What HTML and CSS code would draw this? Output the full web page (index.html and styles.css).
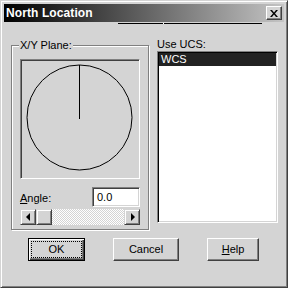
FILE: index.html
```html
<!DOCTYPE html>
<html>
<head>
<meta charset="utf-8">
<link rel="stylesheet" href="styles.css">
</head>
<body>
<div class="window">
  <div class="titlebar">
    <span class="title">North Location</span>
    <div class="close"><svg width="8" height="7" viewBox="0 0 8 7"><path d="M0 0h2l2 2.5L6 0h2L5 3.5 8 7H6L4 4.5 2 7H0l3-3.5z" fill="#000"/></svg></div>
  </div>
  <div class="artifact"><span class="dot"></span></div>
  <div class="main">
    <div class="group">
      <span class="legend">X/Y Plane:</span>
      <div class="compass">
        <svg width="116" height="116" viewBox="0 0 116 116">
          <circle cx="57.5" cy="56.5" r="52.5" fill="none" stroke="#000" stroke-width="1"/>
          <line x1="57.5" y1="4" x2="57.5" y2="58" stroke="#000" stroke-width="1"/>
        </svg>
      </div>
      <div class="angle-row">
        <span class="angle-label"><u>A</u>ngle:</span>
        <div class="input">0.0</div>
      </div>
      <div class="scrollbar">
        <div class="sb-btn"><span class="tri-left"></span></div>
        <div class="sb-thumb"></div>
        <div class="sb-track"></div>
        <div class="sb-btn"><span class="tri-right"></span></div>
      </div>
    </div>
    <div class="ucs">
      <div class="ucs-label">Use UCS:</div>
      <div class="list">
        <div class="item selected">WCS</div>
      </div>
    </div>
  </div>
  <div class="buttons">
    <div class="btn default"><div class="focus">OK</div></div>
    <div class="btn cancel">Cancel</div>
    <div class="btn help"><u>H</u>elp</div>
  </div>
</div>
</body>
</html>
```

FILE: styles.css
```css
* { box-sizing: border-box; }
html, body { margin: 0; padding: 0; }
body {
  width: 288px;
  height: 288px;
  overflow: hidden;
  background: #d4d4d4;
  font-family: "Liberation Sans", Arial, sans-serif;
  font-size: 11px;
  color: #000;
}
.window {
  width: 288px;
  height: 288px;
  background: #d4d4d4;
  border: 1px solid;
  border-color: #d4d4d4 #404040 #404040 #d4d4d4;
  box-shadow: inset 1px 1px 0 #fff, inset -1px -1px 0 #808080;
  padding: 2px;
  display: flex;
  flex-direction: column;
}
.titlebar {
  height: 18px;
  margin: 1px 1px 0 1px;
  background: linear-gradient(to right, #000 0%, #c4c4c4 100%);
  display: flex;
  align-items: center;
  justify-content: space-between;
  padding: 0 2px 0 2px;
}
.title {
  color: #fff;
  font-weight: bold;
  font-size: 12px;
  letter-spacing: 0.1px;
}
.close {
  width: 16px;
  height: 14px;
  background: #d4d4d4;
  border: 1px solid;
  border-color: #fff #404040 #404040 #fff;
  box-shadow: inset -1px -1px 0 #808080;
  display: flex;
  align-items: center;
  justify-content: center;
  padding-right: 1px;
}
.artifact {
  margin: 1px 0 0 115px;
  width: 144px;
  height: 1px;
  background: #000;
  position: relative;
}
.dot {
  position: absolute;
  left: 45px;
  top: 0;
  width: 1px;
  height: 1px;
  background: #fff;
}
.main {
  display: flex;
  align-items: flex-start;
  gap: 8px;
  padding-left: 8px;
}
.group {
  position: relative;
  margin-top: 21px;
  width: 138px;
  height: 185px;
  border: 1px solid #808080;
  box-shadow: inset 1px 1px 0 #fff, 1px 1px 0 #fff;
  padding: 13px 0 0 8px;
}
.legend {
  position: absolute;
  top: -7px;
  left: 7px;
  background: #d4d4d4;
  padding: 0 1px;
  line-height: 13px;
}
.compass {
  width: 120px;
  height: 120px;
  border: 1px solid;
  border-color: #808080 #fff #fff #808080;
  box-shadow: inset 1px 1px 0 #404040, inset -1px -1px 0 #d4d4d4;
  padding: 1px;
}
.compass svg { display: block; }
.angle-row {
  margin-top: 8px;
  height: 20px;
  display: flex;
  align-items: center;
  justify-content: space-between;
  width: 120px;
}
.angle-label { padding-top: 2px; }
.input {
  width: 48px;
  height: 20px;
  background: #fff;
  border: 1px solid;
  border-color: #808080 #fff #fff #808080;
  box-shadow: inset 1px 1px 0 #404040, inset -1px -1px 0 #d4d4d4;
  padding: 3px 0 0 4px;
  line-height: 13px;
}
.scrollbar {
  margin-top: 2px;
  width: 120px;
  height: 16px;
  display: flex;
}
.sb-btn, .sb-thumb {
  width: 16px;
  height: 16px;
  background: #d4d4d4;
  border: 1px solid;
  border-color: #d4d4d4 #404040 #404040 #d4d4d4;
  box-shadow: inset 1px 1px 0 #fff, inset -1px -1px 0 #808080;
  display: flex;
  align-items: center;
  justify-content: center;
}
.sb-track {
  flex: 1;
  background-color: #fff;
  background-image: repeating-conic-gradient(#d4d4d4 0 25%, #fff 0 50%);
  background-size: 2px 2px;
}
.tri-left {
  width: 0; height: 0;
  border-top: 4px solid transparent;
  border-bottom: 4px solid transparent;
  border-right: 4px solid #000;
  margin-right: 1px;
}
.tri-right {
  width: 0; height: 0;
  border-top: 4px solid transparent;
  border-bottom: 4px solid transparent;
  border-left: 4px solid #000;
  margin-left: 1px;
}
.ucs {
  margin-top: 14px;
  width: 121px;
}
.ucs-label {
  line-height: 13px;
  padding-left: 0;
}
.list {
  height: 172px;
  background: #fff;
  border: 1px solid;
  border-color: #808080 #fff #fff #808080;
  box-shadow: inset 1px 1px 0 #000, inset -1px -1px 0 #d4d4d4;
  padding: 1px 1px;
}
.item {
  height: 13px;
  line-height: 13px;
  padding-left: 2px;
}
.item.selected {
  background: #222;
  color: #fff;
}
.buttons {
  display: flex;
  gap: 28px;
  padding-left: 25px;
  margin-top: 8px;
}
.btn {
  height: 23px;
  background: #d4d4d4;
  border: 1px solid;
  border-color: #fff #404040 #404040 #fff;
  box-shadow: inset -1px -1px 0 #808080;
  display: flex;
  align-items: center;
  justify-content: center;
  line-height: 13px;
}
.btn.default {
  width: 57px;
  border: 1px solid #000;
  box-shadow: inset 1px 1px 0 #fff, inset -1px -1px 0 #404040, inset -2px -2px 0 #808080;
  padding: 3px;
}
.focus {
  width: 100%;
  height: 100%;
  outline: 1px dotted #000;
  display: flex;
  align-items: center;
  justify-content: center;
}
.btn.cancel { width: 66px; }
.btn.help { width: 52px; }
```
